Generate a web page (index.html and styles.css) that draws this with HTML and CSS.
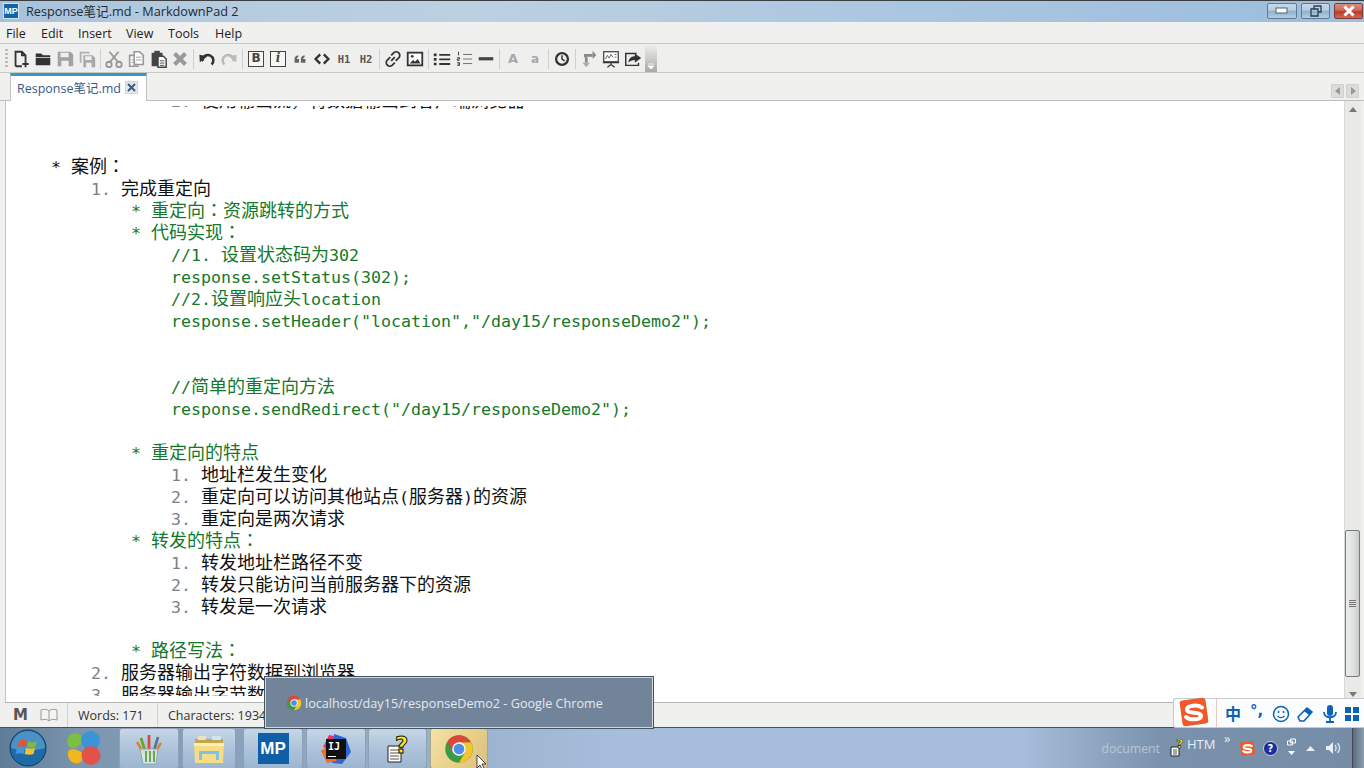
FILE: index.html
```html
<!DOCTYPE html>
<html lang="zh">
<head>
<meta charset="utf-8">
<title>Response笔记.md - MarkdownPad 2</title>
<link rel="stylesheet" href="styles.css">
</head>
<body>
<svg class="defs" width="0" height="0" aria-hidden="true">
  <defs>
    <symbol id="chrome" viewBox="0 0 48 48">
      <circle cx="24" cy="24" r="22" fill="#3a9b45"/>
      <path d="M24 13H43A22 22 0 0 1 24 46L33.5 29.5Z" fill="#f6c52d"/>
      <path d="M5.5 12A22 22 0 0 1 43 13H24L14.5 29.5Z" fill="#d9483b"/>
      <circle cx="24" cy="24" r="11" fill="#f3f3f3"/>
      <circle cx="24" cy="24" r="8.5" fill="#4d8ee8"/>
    </symbol>
    <symbol id="sogou" viewBox="0 0 32 32">
      <rect x="3" y="3" width="26" height="26" rx="3" fill="#f0592a" transform="rotate(-8 16 16)"/>
      <path d="M24 11.5C20 8.500 9 9 9 13.500C9 18.500 23 15 23 20C23 24 12 24.500 8 21" fill="none" stroke="#fff" stroke-width="4" stroke-linecap="round"/>
    </symbol>
  </defs>
</svg>
<div class="window">
  <header class="titlebar">
    <span class="appicon">MP</span>
    <span class="title">Response笔记.md - MarkdownPad 2</span>
    <div class="winbtns">
      <span class="winbtn wide"><svg width="14" height="8" viewBox="0 0 14 8"><rect x="1" y="1" width="11" height="5" fill="#fff" stroke="#4a6076"/></svg></span>
      <span class="winbtn"><svg width="14" height="12" viewBox="0 0 14 12"><path d="M5 1h7v6H9V4H5zM2 4h7v7H2z" fill="none" stroke="#2c3e50" stroke-width="1.300"/></svg></span>
      <span class="winbtn close"><svg width="14" height="12" viewBox="0 0 14 12"><path d="M2.500 1.500l9 9M11.500 1.500l-9 9" stroke="#fff" stroke-width="3"/></svg></span>
    </div>
  </header>
  <nav class="menubar">
    <span class="m1">File</span><span class="m2">Edit</span><span class="m3">Insert</span><span class="m4">View</span><span class="m5">Tools</span><span class="m6">Help</span>
  </nav>
  <div class="toolbar">
    <span class="grip"></span>
    <span class="tb"><svg viewBox="0 0 22 22"><path d="M5 19V3h7l4 4v6M12 3v4h4M5 19h7" fill="none" stroke="#333" stroke-width="2"/><path d="M16 13v7M12.500 16.500h7" stroke="#333" stroke-width="2"/></svg></span>
    <span class="tb"><svg viewBox="0 0 22 22"><path d="M3 5h6l2 2h8v2H3zM3 10h16v8H3z" fill="#333"/></svg></span>
    <span class="tb"><svg viewBox="0 0 22 22"><path d="M3 3h14l3 3v13H3zM6 4v5h9V4zM7 13v6h8v-6z" fill="#a2a2a2" fill-rule="evenodd"/></svg></span>
    <span class="tb"><svg viewBox="0 0 22 22"><path d="M3 3h11v2H5v10H3z" fill="#b0b0b0"/><path d="M7 7h10l3 3v10H7zM9 8v4h7V8zM10 15v5h6v-5z" fill="#a8a8a8" fill-rule="evenodd"/></svg></span>
    <span class="sep"></span>
    <span class="tb"><svg viewBox="0 0 22 22"><path d="M6 3l10 12M16 3L6 15" stroke="#999" stroke-width="2"/><circle cx="5.500" cy="17" r="3" fill="none" stroke="#999" stroke-width="2"/><circle cx="16.500" cy="17" r="3" fill="none" stroke="#999" stroke-width="2"/></svg></span>
    <span class="tb"><svg viewBox="0 0 22 22"><path d="M9 3h6l4 4v10H9zM8 7H4v12h10" fill="#fff" stroke="#999" stroke-width="1.800"/><path d="M11 9h6M11 12h6M6 12h3M6 15h3" stroke="#999"/></svg></span>
    <span class="tb"><svg viewBox="0 0 22 22"><path d="M4 4h12v4H11v11H4z" fill="#444"/><rect x="7" y="2" width="6" height="4" fill="#444"/><path d="M11 8h6l3 3v9h-9z" fill="#fff" stroke="#444" stroke-width="1.600"/><path d="M13 13h5M13 15.500h5M13 18h5" stroke="#444"/></svg></span>
    <span class="tb"><svg viewBox="0 0 22 22"><path d="M5 5l12 12M17 5L5 17" stroke="#999" stroke-width="4.500"/></svg></span>
    <span class="sep"></span>
    <span class="tb"><svg viewBox="0 0 22 22"><path d="M7 13l-1-1a6 6 0 1 1 10 5" fill="none" stroke="#333" stroke-width="2.800"/><path d="M2 7l9 0-7 8z" fill="#333" transform="rotate(10 6 10)"/></svg></span>
    <span class="tb"><svg viewBox="0 0 22 22"><path d="M15 13l1-1a6 6 0 1 0-10 5" fill="none" stroke="#bbb" stroke-width="2.800"/><path d="M20 7l-9 0 7 8z" fill="#bbb" transform="rotate(-10 16 10)"/></svg></span>
    <span class="sep"></span>
    <span class="tb"><b class="boxed">B</b></span>
    <span class="tb"><i class="boxed">i</i></span>
    <span class="tb"><svg viewBox="0 0 22 22"><path d="M5 15v-4c0-2 1.500-3.500 4-4v2c-1 .3-1.500 1-1.500 2H10v4zM12 15v-4c0-2 1.500-3.500 4-4v2c-1 .3-1.500 1-1.500 2H17v4z" fill="#666"/></svg></span>
    <span class="tb"><svg viewBox="0 0 22 22"><path d="M9 6l-5 5 5 5M13 6l5 5-5 5" fill="none" stroke="#333" stroke-width="2.600"/></svg></span>
    <span class="tb tbt">H1</span>
    <span class="tb tbt">H2</span>
    <span class="sep"></span>
    <span class="tb"><svg viewBox="0 0 22 22"><path d="M9 13l4-4M8 9l-3 3a3.500 3.500 0 0 0 5 6l3-3M14 13l3-3a3.500 3.500 0 0 0-5-6L9 7" fill="none" stroke="#333" stroke-width="2"/></svg></span>
    <span class="tb"><svg viewBox="0 0 22 22"><rect x="3" y="4" width="16" height="14" fill="#fff" stroke="#333" stroke-width="2"/><path d="M5 16l4-4 2 2 3-3 3 5z" fill="#333"/><circle cx="8" cy="8" r="1.500" fill="#333"/></svg></span>
    <span class="sep"></span>
    <span class="tb"><svg viewBox="0 0 22 22"><path d="M2 5h3v3H2zM2 10h3v3H2zM2 15h3v3H2z" fill="#333"/><path d="M8 6.500h12M8 11.500h12M8 16.500h12" stroke="#333" stroke-width="2"/></svg></span>
    <span class="tb"><svg viewBox="0 0 22 22"><path d="M10 6h10M10 11h10M10 16h10" stroke="#666"/><path d="M5 3v4M3.500 9.500h2.500v1.500H3.500v1.500h2.500M3.500 15h2.500v1.500H4M6 16.500V18H3.500" fill="none" stroke="#333"/></svg></span>
    <span class="tb"><svg viewBox="0 0 22 22"><rect x="3" y="9" width="16" height="3.500" fill="#444"/></svg></span>
    <span class="sep"></span>
    <span class="tb tbl">A</span>
    <span class="tb tbs">a</span>
    <span class="sep"></span>
    <span class="tb"><svg viewBox="0 0 22 22"><circle cx="11" cy="11" r="6.500" fill="none" stroke="#333" stroke-width="2.500"/><path d="M11 7v4l3 2" fill="none" stroke="#333" stroke-width="1.600"/></svg></span>
    <span class="sep"></span>
    <span class="tb"><svg viewBox="0 0 22 22"><path d="M8 9v6" stroke="#888" stroke-width="3"/><path d="M4 15h8l-4 5z" fill="#aaa"/><path d="M7 9V7h8" fill="none" stroke="#888" stroke-width="3"/><path d="M15 2v9l4-4.500z" fill="#888"/></svg></span>
    <span class="tb"><svg viewBox="0 0 22 22"><rect x="3" y="3" width="16" height="11" fill="#fff" stroke="#444" stroke-width="1.400"/><path d="M5 11l2-4 2 3 2-4 2 3" fill="none" stroke="#555"/><path d="M15 6h2M15 9h2" stroke="#555"/><path d="M2 15h18M11 15v3M7 20l4-3 4 3" stroke="#333" stroke-width="1.300" fill="none"/></svg></span>
    <span class="tb"><svg viewBox="0 0 22 22"><path d="M15 5H3v13h14v-3" fill="none" stroke="#333" stroke-width="1.600"/><path d="M13 5l7 5-7 5v-3c-3 0-5 1-7 3 0-4 3-7 7-7z" fill="#333"/></svg></span>
    <span class="tbmore"><svg width="8" height="6" viewBox="0 0 8 6"><path d="M1 1h6M1 3h6l-3 3z" fill="#fff" stroke="#fff" stroke-width=".8"/></svg></span>
  </div>
  <div class="tabbar">
    <div class="tab">
      <span class="tabtext">Response笔记.md</span>
      <span class="tabclose"><svg width="9" height="9" viewBox="0 0 9 9"><path d="M1 1l7 7M8 1L1 8" stroke="#3b5a82" stroke-width="2"/></svg></span>
    </div>
    <div class="tabnav">
      <span class="tabarrow"><svg width="6" height="8" viewBox="0 0 6 8"><path d="M5 0v8L0 4z" fill="#999"/></svg></span>
      <span class="tabarrow"><svg width="6" height="8" viewBox="0 0 6 8"><path d="M1 0v8l5-4z" fill="#999"/></svg></span>
    </div>
  </div>
  <main class="editorwrap">
    <div class="editor">
      <div class="pane">
        <div class="doc">
          <div class="line lv3"><span class="num">2. </span><span class="zh">使用输出流，将数据输出到客户端浏览器</span></div>
          <div class="line"></div>
          <div class="line"></div>
          <div class="line lv0"><span class="star">* </span><span class="zh">案例</span><span class="zp" lang="zh-Hant">：</span></div>
          <div class="line lv1"><span class="num">1. </span><span class="zh">完成重定向</span></div>
          <div class="line lv2 g"><span class="star">* </span><span class="zh">重定向</span><span class="zp" lang="zh-Hant">：</span><span class="zh">资源跳转的方式</span></div>
          <div class="line lv2 g"><span class="star">* </span><span class="zh">代码实现</span><span class="zp" lang="zh-Hant">：</span></div>
          <div class="line lv3 g">//1. <span class="zh">设置状态码为</span>302</div>
          <div class="line lv3 g">response.setStatus(302);</div>
          <div class="line lv3 g">//2.<span class="zh">设置响应头</span>location</div>
          <div class="line lv3 g">response.setHeader("location","/day15/responseDemo2");</div>
          <div class="line"></div>
          <div class="line"></div>
          <div class="line lv3 g">//<span class="zh">简单的重定向方法</span></div>
          <div class="line lv3 g">response.sendRedirect("/day15/responseDemo2");</div>
          <div class="line"></div>
          <div class="line lv2 g"><span class="star">* </span><span class="zh">重定向的特点</span></div>
          <div class="line lv3"><span class="num">1. </span><span class="zh">地址栏发生变化</span></div>
          <div class="line lv3"><span class="num">2. </span><span class="zh">重定向可以访问其他站点</span>(<span class="zh">服务器</span>)<span class="zh">的资源</span></div>
          <div class="line lv3"><span class="num">3. </span><span class="zh">重定向是两次请求</span></div>
          <div class="line lv2 g"><span class="star">* </span><span class="zh">转发的特点</span><span class="zp" lang="zh-Hant">：</span></div>
          <div class="line lv3"><span class="num">1. </span><span class="zh">转发地址栏路径不变</span></div>
          <div class="line lv3"><span class="num">2. </span><span class="zh">转发只能访问当前服务器下的资源</span></div>
          <div class="line lv3"><span class="num">3. </span><span class="zh">转发是一次请求</span></div>
          <div class="line"></div>
          <div class="line lv2 g"><span class="star">* </span><span class="zh">路径写法</span><span class="zp" lang="zh-Hant">：</span></div>
          <div class="line lv1"><span class="num">2. </span><span class="zh">服务器输出字符数据到浏览器</span></div>
          <div class="line lv1"><span class="num">3. </span><span class="zh">服务器输出字节数据到浏览器</span></div>
        </div>
      </div>
    </div>
    <aside class="scrollbar">
      <span class="sarrow up"></span>
      <span class="strack"><span class="thumb"><span class="grabber"></span></span></span>
      <span class="sarrow down"></span>
    </aside>
  </main>
  <footer class="statusbar">
    <div class="st-icons">
      <span class="st-m">M</span>
      <svg width="18" height="14" viewBox="0 0 18 14"><path d="M9 3C7 1 4 1 1 2v10c3-1 6-1 8 1 2-2 5-2 8-1V2c-3-1-6-1-8 1zv10" fill="#f4f4f2" stroke="#999"/></svg>
    </div>
    <div class="st-cell st-words">Words: 171</div>
    <div class="st-cell">Characters: 1934</div>
  </footer>
</div>
<div class="taskbar">
  <span class="orb">
    <svg width="38" height="38" viewBox="0 0 38 38">
      <circle cx="19" cy="19" r="18" fill="#1d6aa6" stroke="#0d3a5c"/>
      <path d="M2 19a17 17 0 0 1 34 0c-8 3-26 3-34 0z" fill="#6fb3df" opacity=".55"/>
      <path d="M10 12c3-2 6-2 8 0l-1.500 6c-3-1-5-1-8 0z" fill="#e2533a"/>
      <path d="M19 12c3 2 6 2 9 0l-1.500 6c-3 1-6 1-8.500 0z" fill="#7dbb3f"/>
      <path d="M8 19c3-1 5-1 8 0l-1.500 6c-3-1-5-1-8 0z" fill="#3f97e0"/>
      <path d="M17 19c3 1 6 1 9 0l-1.500 6c-3 1-6 1-9 0z" fill="#f5c22f"/>
    </svg>
  </span>
  <span class="pinned">
    <svg width="34" height="36" viewBox="0 0 34 36">
      <path d="M16 9a8 8 0 1 0-12 9c3 1 6-1 8-3 2-1 4-3 4-6z" fill="#7cc043"/>
      <circle cx="23.500" cy="10.500" r="9.500" fill="#3d93d8"/>
      <path d="M2 20a9 9 0 0 0 3 12c5 3 10 1 11-4 1-3-1-6-4-7-3-2-7-2-10-1z" fill="#f0b71f"/>
      <circle cx="24" cy="25.500" r="9.500" fill="#e0524a"/>
    </svg>
  </span>
  <div class="tasks">
    <span class="task t1">
      <svg width="30" height="32" viewBox="0 0 30 32">
        <path d="M7 5l5 16M15 2l0 19M24 4l-5 17M3 9l7 12M27 10l-7 11" stroke-width="2.500" fill="none" stroke="#d9852c"/>
        <path d="M15 2v19" stroke="#d44" stroke-width="2.500"/><path d="M24 4l-5 17" stroke="#47a" stroke-width="2.500"/><path d="M7 5l5 16" stroke="#5a3" stroke-width="2.500"/>
        <path d="M6 16h18l-2 15H9z" fill="#e6eef4" fill-opacity=".8" stroke="#8aa"/>
        <path d="M12 18v11M16 18v11M20 18v11" stroke="#6a4" stroke-width="2"/>
      </svg>
    </span>
    <span class="task t2">
      <svg width="32" height="30" viewBox="0 0 32 30">
        <path d="M2 5h28v6H2z" fill="#c7a64a"/><path d="M5 2h8v4H5z" fill="#e9e3c0"/><path d="M19 2h9v4h-9z" fill="#cfe3f0"/>
        <path d="M1 9h30l-1 20H2z" fill="#f6dc86"/><path d="M1 9h30v3H1z" fill="#fbeeb8"/>
        <path d="M6 26v-9h20v9h-3v-6H9v6z" fill="#7fc2e8"/>
      </svg>
    </span>
    <span class="task t3"><span class="mplogo">MP</span></span>
    <span class="task t4">
      <span class="ijicon">
        <svg width="32" height="32" viewBox="0 0 32 32">
          <path d="M3 14L9 2l9 2-5 14z" fill="#e8336d"/><path d="M14 1l12 4 5 14-9 12-10-1z" fill="#2c67d6"/><path d="M1 18l8-6 8 16-10 2z" fill="#f26b31"/>
        </svg>
        <span class="ijbox">IJ</span>
      </span>
    </span>
    <span class="task t5">
      <svg width="24" height="30" viewBox="0 0 24 30">
        <path d="M2 12h13v16H2z" fill="#fff" stroke="#222"/><path d="M4 16h9M4 19h9M4 22h9M4 25h9" stroke="#555"/>
      </svg>
      <span class="qmark">?</span>
    </span>
    <span class="task t6"><svg width="30" height="30"><use href="#chrome"/></svg></span>
  </div>
  <div class="tray">
    <span class="tray-doc">document</span>
    <span class="tray-help">
      <svg width="14" height="15" viewBox="0 0 14 15"><path d="M1 5h8v9H1z" fill="#fff" stroke="#222"/><path d="M3 8h4M3 10h4M3 12h4" stroke="#555"/></svg>
      <span class="trayq">?</span>
    </span>
    <span class="tray-htm">HTM</span>
    <span class="tray-more">»</span>
    <svg class="tray-s" width="17" height="17"><use href="#sogou"/></svg>
    <span class="tray-q">?</span>
    <span class="tray-lang">
      <svg width="9" height="8" viewBox="0 0 9 8"><path d="M3.500 1h5v4h-5zM.5 3h5v4h-5z" fill="none" stroke="#fff"/></svg>
      <svg width="7" height="4" viewBox="0 0 7 4"><path d="M0 0h7L3.500 4z" fill="#fff"/></svg>
    </span>
    <svg class="tray-up" width="9" height="5" viewBox="0 0 9 5"><path d="M0 5h9L4.500 0z" fill="#e8eef4"/></svg>
    <svg class="tray-vol" width="16" height="14" viewBox="0 0 16 14"><path d="M1 5h3l4-4v12l-4-4H1z" fill="#e8eef4"/><path d="M10 4c1.500 2 1.500 4 0 6M12.500 2c2.500 3 2.500 7 0 10" fill="none" stroke="#dbe4ec" stroke-width="1.300"/></svg>
    <span class="showdesk"></span>
  </div>
</div>
<div class="preview">
  <svg width="16" height="16"><use href="#chrome"/></svg>
  <span>localhost/day15/responseDemo2 - Google Chrome</span>
</div>
<div class="ime">
  <svg class="ime-s" width="32" height="32"><use href="#sogou"/></svg>
  <span class="ime-div"></span>
  <span class="ime-zh">中</span>
  <span class="ime-p">°,</span>
  <svg width="18" height="18" viewBox="0 0 18 18"><circle cx="9" cy="9" r="7.500" fill="none" stroke="#0a63b8" stroke-width="1.500"/><circle cx="6.500" cy="7" r="1" fill="#0a63b8"/><circle cx="11.500" cy="7" r="1" fill="#0a63b8"/><path d="M5.500 11c2 2 5 2 7 0" fill="none" stroke="#0a63b8" stroke-width="1.300"/></svg>
  <svg width="16" height="16" viewBox="0 0 16 16"><path d="M1 11L10 2l5 4-8 9H3z" fill="#fff" stroke="#0a63b8" stroke-width="1.600"/><path d="M7 5l5 4 3-3-5-4z" fill="#0a63b8"/></svg>
  <svg width="14" height="18" viewBox="0 0 14 18"><rect x="4" y="0" width="6" height="11" rx="3" fill="#0a63b8"/><path d="M1 7c0 7 12 7 12 0M7 12v4M3 17h8" fill="none" stroke="#0a63b8" stroke-width="1.800"/></svg>
  <svg width="14" height="14" viewBox="0 0 14 14"><path d="M0 0h6v6H0zM8 0h6v6H8zM0 8h6v6H0zM8 8h6v6H8z" fill="#0a63b8"/></svg>
</div>
<svg class="cursor" width="13" height="16" viewBox="0 0 13 16"><path d="M1 1v13l3-3 2 4 2-1-2-4h4z" fill="#fff" stroke="#222" stroke-width=".8"/></svg>
</body>
</html>
```

FILE: styles.css
```css
* { box-sizing: border-box; }
html, body { margin: 0; padding: 0; width: 1364px; height: 768px; overflow: hidden; }
body { display: flex; flex-direction: column; font-family: "Open Sans", "Noto Sans CJK SC", sans-serif; background: #f0f0ee; position: relative; }
.defs { position: absolute; }
.window { flex: 1; display: flex; flex-direction: column; min-height: 0; }

.titlebar { height: 22px; flex: none; display: flex; align-items: center; padding: 0 0 2px 3px; border-top: 1px solid #3b3f42; background: linear-gradient(90deg, #a7c1da 0%, #b3cadf 12%, #bcd0e2 35%, #a9c5e0 70%, #9cbddd 100%); }
.appicon { width: 16px; height: 16px; background: #1464ac; color: #fff; font: bold 9px/14px "Liberation Sans", sans-serif; text-align: center; border: 1px solid #cfe0ee; }
.title { margin-left: 7px; font-size: 12.700px; color: #1f2a33; white-space: nowrap; }
.winbtns { margin-left: auto; margin-right: 1px; display: flex; gap: 4px; }
.winbtn { width: 29px; height: 16px; display: flex; align-items: center; justify-content: center; border: 1px solid #5d7a98; border-radius: 2px; background: linear-gradient(#c5d8e8 0%, #b6cce0 45%, #8fb0cc 50%, #b3cde2 100%); }
.winbtn.wide { width: 30px; }
.winbtn.close { background: linear-gradient(#dc8d7e 0%, #cb6a58 45%, #b63a28 55%, #cf6b50 100%); border-color: #7a3a32; }

.menubar { height: 22px; flex: none; display: grid; grid-template-columns: 35px 37px 48px 42px 47px 50px; align-items: center; padding: 1px 0 0 6px; font-size: 12.500px; color: #222; background: #f0f0ee; border-bottom: 1px solid #c9cac8; }

.toolbar { height: 29px; flex: none; display: flex; align-items: center; padding: 1px 0 0 5px; background: #eff0ee; border-bottom: 1px solid #c9cac8; }
.grip { width: 3px; height: 20px; margin-right: 2px; background: repeating-linear-gradient(#bbb 0 2px, transparent 2px 4px); }
.tb { width: 22px; height: 22px; flex: none; display: flex; align-items: center; justify-content: center; }
.tb svg { width: 20px; height: 20px; display: block; }
.sep { width: 5px; height: 22px; flex: none; position: relative; }
.sep::after { content: ""; position: absolute; left: 2px; top: 1px; bottom: 1px; width: 1px; background: #cfd0ce; }
.boxed { display: block; width: 16px; height: 16px; border: 1.500px solid #444; background: #f7f7f5; color: #444; text-align: center; font: bold 12px/13px "DejaVu Sans", sans-serif; }
i.boxed { font: italic bold 12px/13px "DejaVu Serif", serif; }
.tbt { font: bold 10.500px "DejaVu Sans Mono", monospace; color: #555; }
.tbl { font: bold 13px "DejaVu Sans", sans-serif; color: #a8a8a8; }
.tbs { font: bold 12px "DejaVu Sans", sans-serif; color: #a8a8a8; }
.tbmore { width: 12px; height: 28px; margin-left: 1px; align-self: flex-end; display: flex; align-items: flex-end; justify-content: center; padding-bottom: 3px; background: linear-gradient(#f0f0ee, #a9aaa8); }

.tabbar { height: 28px; flex: none; display: flex; align-items: flex-end; padding-left: 10px; background: #f0f0ee; border-bottom: 1px solid #bfc0be; }
.tab { width: 137px; height: 28px; margin-bottom: -1px; display: flex; align-items: center; padding: 0 8px 3px 6px; background: #fff; border-top: 3px solid #3b98bf; border-left: 1px solid #c3c4c2; border-right: 1px solid #c3c4c2; color: #3a5a85; font-size: 12.500px; }
.tabtext { white-space: nowrap; }
.tabclose { margin-left: auto; width: 13px; height: 13px; display: flex; align-items: center; justify-content: center; background: #e4e7ea; border: 1px solid #d3d6d8; }
.tabnav { margin-left: auto; margin-right: 5px; margin-bottom: 2px; display: flex; gap: 2px; }
.tabarrow { width: 13px; height: 14px; display: flex; align-items: center; justify-content: center; background: #dcdcda; border: 1px solid #d0d0ce; border-radius: 1px; }

.editorwrap { flex: 1; min-height: 0; display: flex; padding-left: 5px; padding-right: 3px; background: #f0f0ee; }
.editor { flex: 1; min-width: 0; display: flex; flex-direction: column; padding: 5px 0 6px; background: #fff; border-left: 1px solid #c3c4c2; border-bottom: 1px solid #b5b6b4; }
.pane { flex: 1; min-height: 0; overflow: hidden; }
.doc { margin-top: -18px; font: 16.610px/22px "DejaVu Sans Mono", monospace; color: #111; }
.line { height: 22px; white-space: pre; }
.line::before { content: "\200b"; font: 18px/22px "Noto Sans CJK SC", sans-serif; }
.zh { font: 18px/22px "Noto Sans CJK SC", sans-serif; }
.zp { font: 18px/22px "Noto Sans CJK TC", sans-serif; }
.lv0 { padding-left: 45px; }
.lv1 { padding-left: 85px; }
.lv2 { padding-left: 125px; }
.lv3 { padding-left: 165px; }
.g { color: #14782a; }
.num { color: #79828a; }
.star { }

.scrollbar { width: 17px; flex: none; display: flex; flex-direction: column; background: #e9e9e8; border-left: 1px solid #d8d8d6; }
.sarrow { height: 17px; flex: none; position: relative; }
.sarrow::after { content: ""; position: absolute; left: 4px; top: 6px; border-left: 4px solid transparent; border-right: 4px solid transparent; }
.sarrow.up::after { border-bottom: 5px solid #777; }
.sarrow.down::after { border-top: 5px solid #777; }
.strack { flex: 1; display: flex; flex-direction: column; justify-content: flex-end; padding: 0 1px 9px 0; }
.thumb { height: 147px; display: flex; align-items: center; justify-content: center; border: 1px solid #777b7e; border-radius: 2px; background: linear-gradient(90deg, #eceded, #dcdedf 60%, #c9cbcc); }
.grabber { width: 7px; height: 8px; background: repeating-linear-gradient(#777 0 1px, #ddd 1px 2px); }

.statusbar { height: 24px; flex: none; display: flex; align-items: center; background: #f0f0ee; font-size: 12.500px; color: #333; }
.st-icons { width: 68px; height: 100%; display: flex; align-items: center; gap: 12px; padding-left: 13px; border-right: 1px solid #d2d3d1; }
.st-m { font: bold 15px "DejaVu Sans", sans-serif; color: #555; }
.st-cell { height: 100%; display: flex; align-items: center; padding: 0 10px; white-space: nowrap; }
.st-words { width: 90px; border-right: 1px solid #d2d3d1; }

.taskbar { height: 41px; flex: none; display: flex; align-items: center; background: linear-gradient(90deg, #5e7b97 0%, #7d96b0 6%, #a6bedb 45%, #a6bedb 75%, #7a92ad 85%, #758ca6 100%); border-top: 1px solid #3f5266; }
.orb { width: 38px; height: 38px; margin-left: 9px; flex: none; }
.pinned { margin-left: 20px; width: 34px; height: 36px; flex: none; }
.tasks { margin-left: 18px; display: flex; align-self: stretch; }
.task { height: 41px; display: flex; align-items: center; justify-content: center; flex: none; border: 1px solid #8ca0b6; border-radius: 3px; background: linear-gradient(#c6d6e6, #a9c0d8 60%, #9db6d0); position: relative; }
.t1 { width: 60px; }
.t2 { width: 54px; margin-left: 3px; }
.t3 { width: 60px; margin-left: 7px; }
.t4 { width: 60px; margin-left: 3px; }
.t5 { width: 59px; margin-left: 2px; }
.t6 { width: 58px; margin-left: 3px; background: linear-gradient(120deg, #f4e2a8, #e8cd85 60%, #d9c088); border-color: #a9a68a; }
.mplogo { width: 31px; height: 31px; background: #0f5ea8; color: #fff; font: bold 17px/31px "Liberation Sans", sans-serif; text-align: center; }
.ijicon { width: 32px; height: 32px; position: relative; display: block; }
.ijbox { position: absolute; left: 6px; top: 6px; width: 20px; height: 20px; background: #111; color: #fff; font: bold 10px/15px "DejaVu Sans Mono", monospace; padding-left: 2px; }
.ijbox::after { content: ""; position: absolute; left: 2px; bottom: 2px; width: 8px; height: 1px; background: #fff; }
.qmark { position: absolute; left: 26px; top: 2px; font: bold 23px/28px "DejaVu Sans", sans-serif; color: #f8ea1a; -webkit-text-stroke: 1px #111; }

.tray { margin-left: auto; height: 100%; display: flex; align-items: center; color: #e9eff5; }
.tray-doc { margin-right: 10px; font-size: 12.300px; color: #b8c6d5; }
.tray-help { position: relative; width: 16px; height: 16px; margin-right: 1px; }
.trayq { position: absolute; left: 6px; top: -4px; font: bold 13px/16px "DejaVu Sans", sans-serif; color: #f8ea1a; -webkit-text-stroke: .5px #111; }
.tray-htm { font-size: 13px; margin-top: -9px; width: 37px; }
.tray-more { font-size: 13px; line-height: 12px; margin-top: -21px; width: 15px; }
.tray-s { margin-right: 7px; }
.tray-q { width: 15px; height: 15px; border-radius: 50%; background: radial-gradient(#2a3fc0, #101d70); border: 1px solid #c6d0dc; color: #fff; font: bold 10px/13px "DejaVu Sans", sans-serif; text-align: center; }
.tray-lang { width: 9px; margin-left: 9px; display: flex; flex-direction: column; align-items: center; gap: 5px; margin-top: -3px; }
.tray-up { margin-left: 10px; }
.tray-vol { margin-left: 10px; margin-right: 11px; }
.showdesk { width: 12px; height: 100%; background: linear-gradient(90deg, #5b6b7d, #8c9db0); border-left: 1px solid #445; }

.preview { position: absolute; left: 265px; top: 677px; width: 388px; height: 51px; display: flex; align-items: center; gap: 3px; padding: 1px 0 0 20px; background: #72849a; border: 1px solid #cfd6dd; outline: 1px solid #46535f; color: #e3e9ef; font-size: 12.650px; }
.ime { position: absolute; left: 1173px; top: 698px; width: 191px; height: 30px; display: flex; align-items: center; background: #fbfcfd; border: 1px solid #c6cbcf; border-right: 0; border-radius: 3px 0 0 3px; }
.ime-s { position: absolute; left: 4px; top: -3px; }
.ime-div { position: absolute; left: 42px; top: 0; bottom: 0; width: 1px; background: #ecc9bf; }
.ime-zh { position: absolute; left: 51px; top: 3px; font: bold 16px/22px "Noto Sans CJK SC", sans-serif; color: #0a63b8; }
.ime-p { position: absolute; left: 76px; top: 1px; font: bold 15px/22px "DejaVu Sans", sans-serif; color: #0a63b8; }
.ime svg:nth-of-type(2) { position: absolute; left: 98px; top: 6px; }
.ime svg:nth-of-type(3) { position: absolute; left: 123px; top: 7px; }
.ime svg:nth-of-type(4) { position: absolute; left: 149px; top: 6px; }
.ime svg:nth-of-type(5) { position: absolute; left: 171px; top: 8px; }
.cursor { position: absolute; left: 476px; top: 754px; }
```
